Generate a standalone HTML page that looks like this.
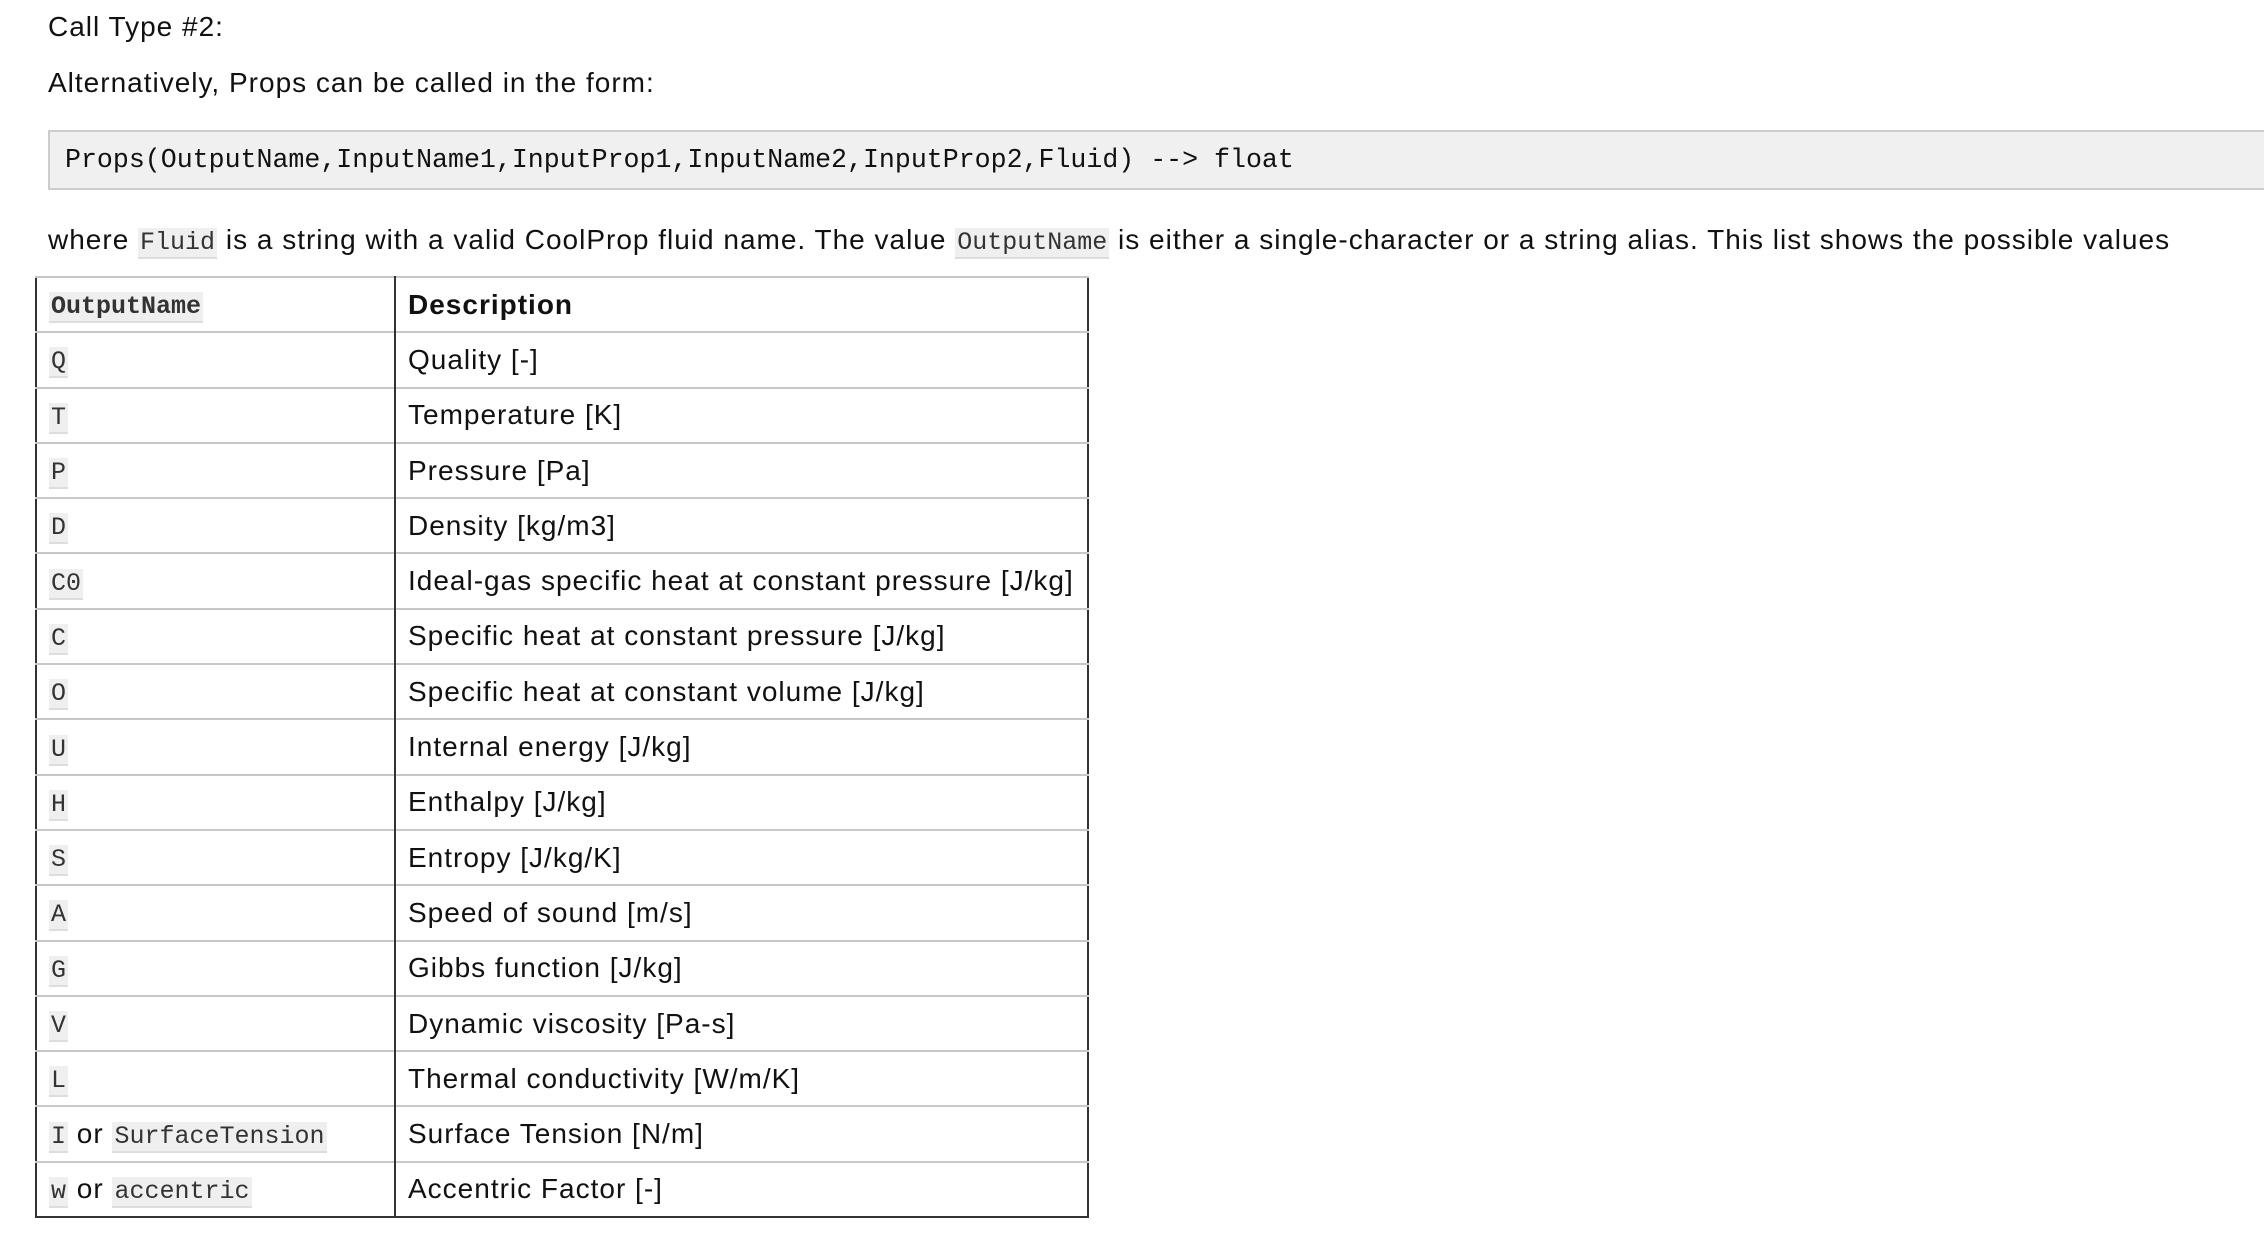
<!DOCTYPE html>
<html><head><meta charset="utf-8"><style>
body{margin:0;background:#fff;width:2264px;height:1234px;overflow:hidden;font-family:"Liberation Sans",sans-serif;color:#111;font-size:28px;letter-spacing:1px}
.p{position:absolute;left:48px;white-space:nowrap}
code{font-family:"Liberation Mono",monospace;font-size:25px;letter-spacing:0;background:#efefef;border-bottom:2px solid #ddd;padding:0 2px;color:#333}
.pre{position:absolute;left:48px;top:130px;width:2230px;height:60px;background:#f0f0f0;border:2px solid #ccc;box-sizing:border-box;font-family:"Liberation Mono",monospace;font-size:26.6px;letter-spacing:0;line-height:56px;padding-left:15px;color:#111;white-space:nowrap}
table{position:absolute;left:35px;top:276px;border-collapse:collapse;border:2px solid #333}
td,th{height:53.3px;border-top:2px solid #c8c8c8;padding:0 12px;text-align:left;font-weight:normal;white-space:nowrap}
td:first-child,th:first-child{width:333px;border-right:2px solid #333}
td:last-child,th:last-child{width:667px}
th:last-child{font-weight:bold}
th code{font-weight:bold}
</style></head><body>
<div class="p" style="top:11px">Call Type #2:</div>
<div class="p" style="top:67px">Alternatively, Props can be called in the form:</div>
<div class="pre">Props(OutputName,InputName1,InputProp1,InputName2,InputProp2,Fluid) --&gt; float</div>
<div class="p" style="top:224px">where <code>Fluid</code> is a string with a valid CoolProp fluid name. The value <code>OutputName</code> is either a single-character or a string alias. This list shows the possible values</div>
<table>
<tr><th><code>OutputName</code></th><th>Description</th></tr>
<tr><td><code>Q</code></td><td>Quality [-]</td></tr>
<tr><td><code>T</code></td><td>Temperature [K]</td></tr>
<tr><td><code>P</code></td><td>Pressure [Pa]</td></tr>
<tr><td><code>D</code></td><td>Density [kg/m3]</td></tr>
<tr><td><code>C0</code></td><td>Ideal-gas specific heat at constant pressure [J/kg]</td></tr>
<tr><td><code>C</code></td><td>Specific heat at constant pressure [J/kg]</td></tr>
<tr><td><code>O</code></td><td>Specific heat at constant volume [J/kg]</td></tr>
<tr><td><code>U</code></td><td>Internal energy [J/kg]</td></tr>
<tr><td><code>H</code></td><td>Enthalpy [J/kg]</td></tr>
<tr><td><code>S</code></td><td>Entropy [J/kg/K]</td></tr>
<tr><td><code>A</code></td><td>Speed of sound [m/s]</td></tr>
<tr><td><code>G</code></td><td>Gibbs function [J/kg]</td></tr>
<tr><td><code>V</code></td><td>Dynamic viscosity [Pa-s]</td></tr>
<tr><td><code>L</code></td><td>Thermal conductivity [W/m/K]</td></tr>
<tr><td><code>I</code> or <code>SurfaceTension</code></td><td>Surface Tension [N/m]</td></tr>
<tr><td><code>w</code> or <code>accentric</code></td><td>Accentric Factor [-]</td></tr>
</table>
</body></html>
